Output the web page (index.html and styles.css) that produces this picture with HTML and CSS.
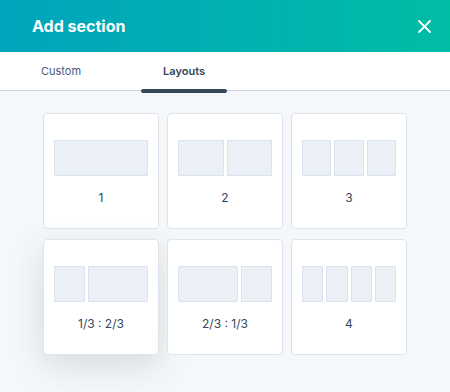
FILE: index.html
```html
<!DOCTYPE html>
<html lang="en">
<head>
    <meta charset="UTF-8">
    <meta name="viewport" content="width=device-width, initial-scale=1.0">
    <title>Add section</title>
    <link rel="stylesheet" href="styles.css">
</head>
<body>
    <div class="panel-header">
        <h1>Add section</h1>
        <button class="close-btn" aria-label="Close">
            <svg width="13" height="13" viewBox="0 0 13 13">
                <path d="M1 1 L12 12 M12 1 L1 12" stroke="#fff" stroke-width="1.8" stroke-linecap="round" fill="none"/>
            </svg>
        </button>
    </div>

    <div class="tabs">
        <div class="tab">Custom</div>
        <div class="tab active">Layouts</div>
    </div>

    <div class="layouts">
        <div class="layout-card">
            <div class="preview"><span></span></div>
            <div class="label">1</div>
        </div>
        <div class="layout-card">
            <div class="preview"><span></span><span></span></div>
            <div class="label">2</div>
        </div>
        <div class="layout-card">
            <div class="preview"><span></span><span></span><span></span></div>
            <div class="label">3</div>
        </div>
        <div class="layout-card hovered">
            <div class="preview"><span></span><span class="wide"></span></div>
            <div class="label">1/3 : 2/3</div>
        </div>
        <div class="layout-card">
            <div class="preview"><span class="wide"></span><span></span></div>
            <div class="label">2/3 : 1/3</div>
        </div>
        <div class="layout-card">
            <div class="preview"><span></span><span></span><span></span><span></span></div>
            <div class="label">4</div>
        </div>
    </div>
</body>
</html>
```

FILE: styles.css
```css
body {
    margin: 0;
    font-family: Inter, "Noto Sans", sans-serif;
    background-color: #f5f8fa;
    color: #33475b;
    height: 392px;
    overflow: hidden;
}

.panel-header {
    height: 52px;
    display: flex;
    align-items: center;
    justify-content: space-between;
    padding: 0 19px 0 32px;
    background: linear-gradient(to right, #00a4bd, #00bda5);
}

.panel-header h1 {
    margin: 0;
    font-size: 16px;
    font-weight: 700;
    color: #fff;
}

.close-btn {
    background: none;
    border: none;
    padding: 0;
    width: 13px;
    height: 13px;
    display: flex;
    cursor: pointer;
}

.tabs {
    display: flex;
    gap: 38px;
    height: 38px;
    padding-left: 19px;
    background-color: #fff;
    border-bottom: 1px solid #cbd6e2;
}

.tab {
    position: relative;
    display: flex;
    align-items: center;
    padding: 0 22px;
    font-size: 11px;
    color: #425b76;
    cursor: pointer;
}

.tab.active {
    font-weight: 600;
    color: #33475b;
}

.tab.active::after {
    content: '';
    position: absolute;
    left: 0;
    right: 0;
    bottom: -3px;
    height: 4px;
    border-radius: 2px;
    background-color: #33475b;
}

.layouts {
    display: grid;
    grid-template-columns: repeat(3, 116px);
    column-gap: 8px;
    row-gap: 10px;
    justify-content: center;
    padding-top: 22px;
}

.layout-card {
    height: 116px;
    box-sizing: border-box;
    background-color: #fff;
    border: 1px solid #dfe3eb;
    border-radius: 4px;
    padding: 26px 10px 0;
    cursor: pointer;
}

.layout-card.hovered {
    box-shadow: 0 10px 32px rgba(45, 62, 80, 0.16);
}

.preview {
    display: flex;
    gap: 3px;
    height: 36px;
}

.preview span {
    flex: 1;
    background-color: #eaf0f6;
    border: 1px solid #dbe3ee;
}

.preview span.wide {
    flex: 2;
}

.label {
    margin-top: 14px;
    line-height: 16px;
    font-size: 12px;
    text-align: center;
    color: #33475b;
}
```
